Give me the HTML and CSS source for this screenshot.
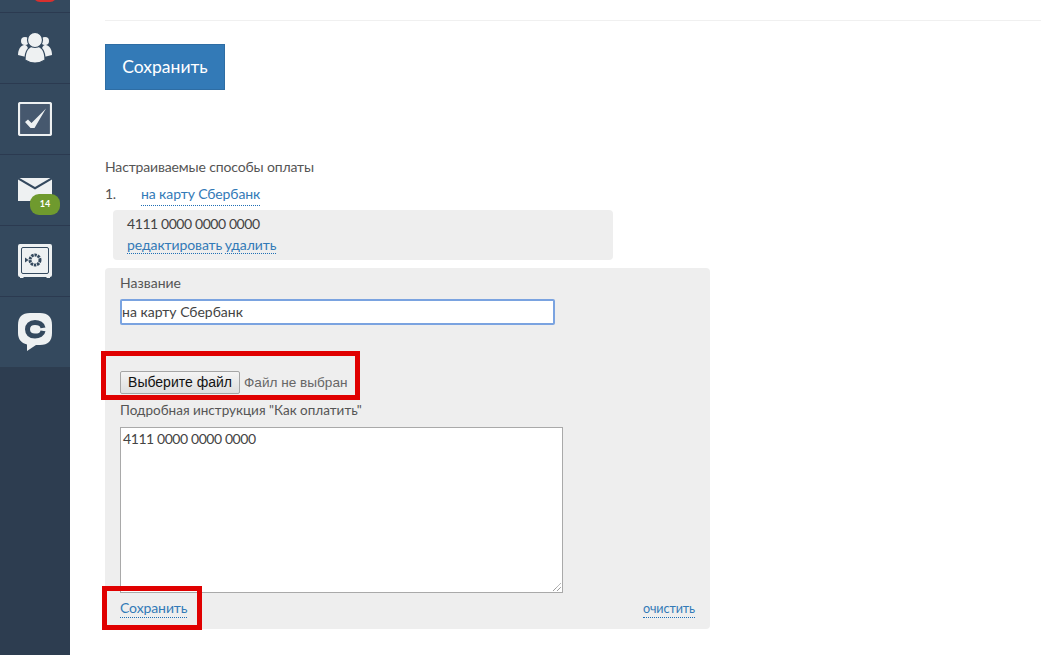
FILE: index.html
```html
<!DOCTYPE html>
<html lang="ru">
<head>
<meta charset="utf-8">
<title>Способы оплаты</title>
<link rel="stylesheet" href="styles.css">
</head>
<body>
<div class="app">
  <nav class="sidebar">
    <div class="nav-top"><span class="red-badge"></span></div>
    <div class="nav-item">
      <svg width="36" height="32" viewBox="0 0 36 32"><g fill="#eef1f2"><circle cx="8" cy="9" r="4"/><circle cx="28" cy="9" r="4"/><path d="M1 23c0-5 2-9 6-10 3 0 4 2 4 5l-2 7z"/><path d="M35 23c0-5-2-9-6-10-3 0-4 2-4 5l2 7z"/></g><g fill="#eef1f2" stroke="#34495e" stroke-width="1.2"><path d="M8 28c0-9 3-14 10-14s10 5 10 14c-3 2-6 3-10 3s-7-1-10-3z"/><circle cx="18" cy="8" r="7.5"/></g></svg>
    </div>
    <div class="nav-item">
      <svg width="34" height="34" viewBox="0 0 34 34"><rect x="1" y="1" width="32" height="32" rx="1.5" fill="#46586e" stroke="#eef1f2" stroke-width="2.2"/><path d="M7 20l3-2.500 3.500 3.500L28 6.500 16.500 26h-4z" fill="#eef1f2"/></svg>
    </div>
    <div class="nav-item">
      <svg class="mail" width="34" height="24" viewBox="0 0 34 24"><path d="M0 1.500l17 10 17-10V23H0z" fill="#eef1f2"/><path d="M1.500 0h31L17 9z" fill="#eef1f2"/></svg>
      <span class="green-badge">14</span>
    </div>
    <div class="nav-item">
      <svg width="34" height="34" viewBox="0 0 34 34"><path d="M2 0h30a2 2 0 0 1 2 2v29a2 2 0 0 1-2 2v1h-3l-1-1H6l-1 1H2v-1a2 2 0 0 1-2-2V2a2 2 0 0 1 2-2z" fill="#eef1f2"/><rect x="3.500" y="3.500" width="27" height="26" rx="1.500" fill="none" stroke="#34495e" stroke-width="1"/><circle cx="17" cy="16" r="5" fill="none" stroke="#34495e" stroke-width="3" stroke-dasharray="2.400 .8"/><path d="M7 13.500l3.500 2.500L7 18.500z" fill="#34495e"/></svg>
    </div>
    <div class="nav-item nav-last">
      <svg width="34" height="38" viewBox="0 0 34 38"><path d="M12 0h10c8 0 12 4 12 12v8c0 8-4 12-12 12h-4l-9 6 0-6.500C3 30 0 26 0 20v-8C0 4 4 0 12 0z" fill="#eef1f2"/><path d="M25 14.800C24.500 11.500 21 9.500 17 9.500c-5 0-7.500 3-7.500 6.800s2.500 6.800 7.500 6.800c4 0 7.500-2 8-5.300" fill="none" stroke="#34495e" stroke-width="5"/></svg>
    </div>
  </nav>
  <main class="content">
    <div class="top-rule"></div>
    <button class="save-main">Сохранить</button>
    <p class="section-title">Настраиваемые способы оплаты</p>
    <div class="method-row"><span class="num">1.</span><a class="link">на карту Сбербанк</a></div>
    <div class="method-card">
      <div class="card-number">4111 0000 0000 0000</div>
      <div class="card-actions"><a class="link">редактировать</a> <a class="link">удалить</a></div>
    </div>
    <form class="edit-panel">
      <div class="label">Название</div>
      <div class="name-input">на карту Сбербанк</div>
      <div class="file-row"><span class="file-btn">Выберите файл</span><span class="file-text">Файл не выбран</span></div>
      <div class="label label-tight">Подробная инструкция "Как оплатить"</div>
      <div class="textarea">4111 0000 0000 0000
        <svg class="grip" width="10" height="10" viewBox="0 0 10 10"><path d="M1 9l8-8M5 9l4-4" stroke="#777" stroke-width="1" stroke-dasharray="1 .6"/></svg>
      </div>
      <div class="panel-foot"><a class="link">Сохранить</a><a class="link link-clear">очистить</a></div>
    </form>
  </main>
</div>
<div class="mark mark-file"></div>
<div class="mark mark-save"></div>
</body>
</html>
```

FILE: styles.css
```css
* { box-sizing: border-box; }
html, body { margin: 0; padding: 0; height: 100%; overflow: hidden; background: #fff; }
body { font-family: "Lato", "Open Sans", sans-serif; font-size: 14px; color: #4c4c4c; position: relative; }
.app { display: flex; height: 655px; }
.sidebar { width: 70px; flex: none; background: #2d3d50; }
.nav-top { height: 13px; background: #34495e; border-bottom: 1px solid #2b3a50; position: relative; overflow: hidden; }
.red-badge { position: absolute; left: 33px; top: -18px; width: 24px; height: 20px; border-radius: 7px; background: #d9302e; }
.nav-item { height: 71px; background: #34495e; border-bottom: 1px solid #2b3a50; display: flex; align-items: center; justify-content: center; position: relative; }
.nav-last { border-bottom: 0; height: 70px; }
.mail { margin-top: 0; }
.green-badge { position: absolute; left: 30px; top: 39px; width: 30px; height: 21px; border-radius: 9px; background: #6f9a2e; color: #fff; font: 700 9px/20px "Lato", sans-serif; text-align: center; }
.content { flex: 1; padding-left: 35px; min-width: 0; }
.top-rule { margin-top: 20px; height: 1px; background: #f0f0f0; }
.save-main { display: block; margin-top: 23px; width: 120px; height: 46px; background: #337ab7; border: 1px solid #2e6da4; color: #fff; font: 17.500px "Lato", sans-serif; padding: 0 0 2px; }
.section-title { margin: 68px 0 0; line-height: 17px; color: #555; letter-spacing: -.15px; }
.method-row { display: flex; margin-top: 10px; line-height: 17px; height: 21px; }
.num { width: 36px; color: #555; letter-spacing: -.4px; }
.link { color: #337ab7; border-bottom: 1px dotted #1f6fb5; letter-spacing: -.1px; }
.method-card { margin: 4px 0 0 8px; width: 500px; height: 50px; background: #eee; border-radius: 4px; padding: 5px 14px; }
.card-number { line-height: 17px; color: #444; letter-spacing: -.42px; }
.card-actions { margin-top: 4px; line-height: 17px; word-spacing: -1px; }
.edit-panel { margin-top: 8px; width: 605px; height: 361px; background: #eee; border-radius: 4px; padding: 6px 15px 0; }
.label { line-height: 17px; color: #555; }
.name-input { width: 435px; height: 26px; margin-top: 8px; background: #fff; border: 2px solid #7aa3e0; border-radius: 2px; padding-left: 0; line-height: 21px; color: #444; }
.file-row { display: flex; align-items: center; margin-top: 46px; height: 23px; }
.file-btn { width: 120px; height: 23px; background: linear-gradient(#f4f4f4, #dedede); border: 1px solid #a5a5a5; border-radius: 2px; color: #111; font: 14px/21px "Liberation Sans", sans-serif; text-align: center; }
.file-text { margin-left: 4px; color: #666; font: 13.600px "Liberation Sans", sans-serif; }
.label-tight { margin-top: 8px; font-size: 13.500px; }
.textarea { position: relative; width: 443px; height: 166px; margin-top: 8px; background: #fff; border: 1px solid #a9a9a9; padding: 2px; line-height: 17px; color: #444; letter-spacing: -.42px; }
.grip { position: absolute; right: 0; bottom: 0; }
.panel-foot { display: flex; justify-content: space-between; margin-top: 6px; line-height: 17px; }
.link-clear { font-size: 12.600px; line-height: 16px; align-self: flex-start; margin-top: 2px; }
.mark { position: absolute; border: 5px solid #e00000; pointer-events: none; }
.mark-file { left: 101px; top: 351px; width: 259px; height: 49px; }
.mark-save { left: 102px; top: 586px; width: 100px; height: 44px; }
```
